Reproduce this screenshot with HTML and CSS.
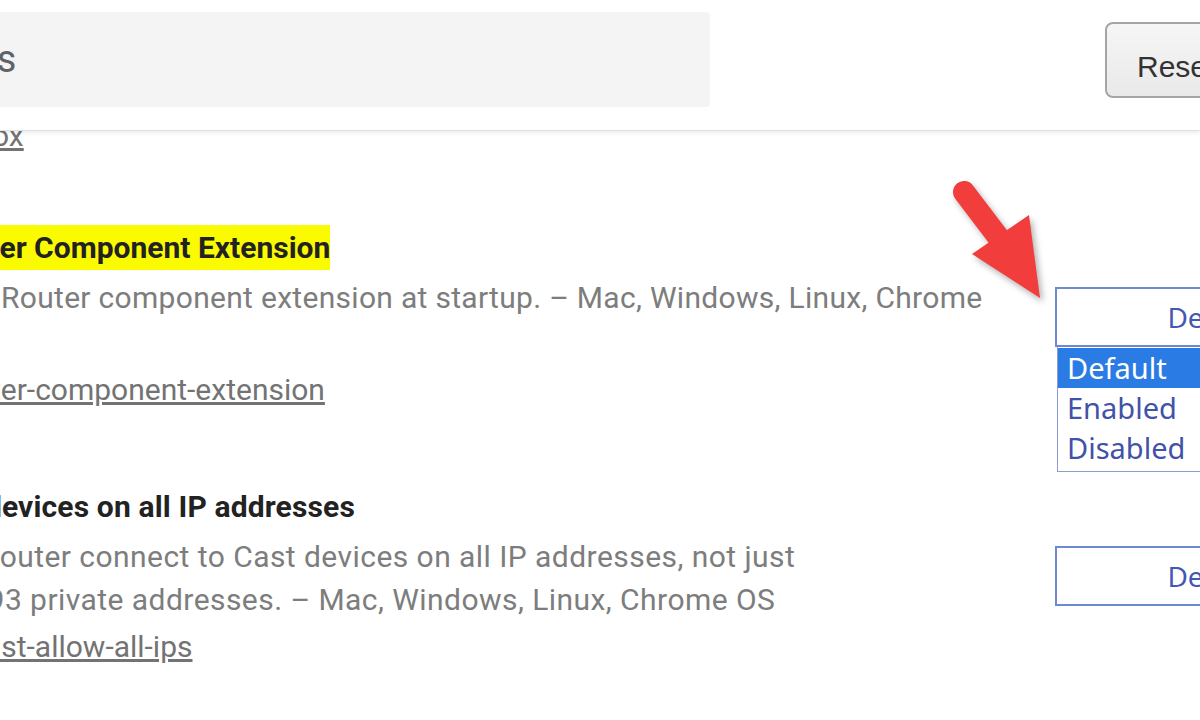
FILE: index.html
```html
<!DOCTYPE html>
<html lang="en">
<head>
  <meta charset="UTF-8">
  <title>Experiments</title>
  <link rel="stylesheet" href="styles.css">
</head>
<body>
  <header class="toolbar">
    <div class="search">Search flags</div>
    <button class="reset-btn">Reset all to default</button>
  </header>

  <main class="flags">
    <div class="flag flag-prev">
      <div class="flag-info">
        <div class="flag-ref"><a class="flag-link" href="#">#renderer-sandbox</a></div>
      </div>
    </div>

    <div class="flag">
      <div class="flag-info">
        <div class="flag-name"><mark>Load Media Router Component Extension</mark></div>
        <p class="flag-desc">Loads the Media Router component extension at startup. – Mac, Windows, Linux, Chrome OS</p>
        <div class="flag-ref"><a class="flag-link" href="#">#load-media-router-component-extension</a></div>
      </div>
      <div class="flag-control">
        <div class="select">Default</div>
        <!-- open dropdown -->
        <ul class="select-menu">
          <li class="selected">Default</li>
          <li>Enabled</li>
          <li>Disabled</li>
        </ul>
      </div>
    </div>

    <div class="flag flag-wide">
      <div class="flag-info">
        <div class="flag-name">Connect to Cast devices on all IP addresses</div>
        <p class="flag-desc">Have the Media Router connect to Cast devices on all IP addresses, not just RFC1918/RFC4193 private addresses. – Mac, Windows, Linux, Chrome OS</p>
        <div class="flag-ref"><a class="flag-link" href="#">#media-router-cast-allow-all-ips</a></div>
      </div>
      <div class="flag-control">
        <div class="select">Default</div>
      </div>
    </div>
  </main>

  <!-- annotation arrow -->
  <svg class="arrow" width="120" height="140" viewBox="0 0 120 140">
    <line x1="24" y1="22" x2="62" y2="72" stroke="#f23d3d" stroke-width="22" stroke-linecap="round"/>
    <polygon points="32,84 89,45 100,128" fill="#f23d3d"/>
  </svg>
</body>
</html>
```

FILE: styles.css
```css
/* Base */
body {
  font-family: Roboto, "Noto Sans", sans-serif;
  background: #fff;
  margin: 0;
  width: 1200px;
  height: 720px;
  overflow: hidden;
  position: relative;
}

/* Top bar */
.toolbar {
  display: flex;
  align-items: flex-start;
  height: 130px;
  background: #fff;
  border-bottom: 1px solid #e2e2e2;
  box-shadow: 0 2px 4px rgba(0,0,0,0.08);
  position: relative;
  z-index: 1;
}
.search {
  flex: none;
  box-sizing: border-box;
  width: 950px;
  height: 95px;
  margin: 12px 0 0 -240px;
  padding-left: 47px;
  background: #f4f4f4;
  border-radius: 4px;
  font-size: 38px;
  line-height: 95px;
  color: #5f6368;
  white-space: nowrap;
}
.reset-btn {
  flex: none;
  margin: 22px 0 0 395px;
  padding: 28px 30px 14px;
  font-family: "Liberation Sans", Arial, sans-serif;
  font-size: 30px;
  line-height: 30px;
  color: #333;
  background: linear-gradient(#f6f6f6, #e9e9e9);
  border: 2px solid #a5a5a5;
  border-radius: 8px;
  white-space: nowrap;
}

/* Flag list */
.flags {
  margin: -21px 0 0 -228px;
}
.flag {
  display: flex;
  margin-bottom: 72px;
}
.flag-prev {
  margin-bottom: 67px;
}
.flag-info {
  flex: none;
  width: 1233px;
  font-size: 30px;
}
.flag-name {
  font-weight: bold;
  color: #222;
  line-height: 45px;
  margin-bottom: 6px;
  white-space: nowrap;
}
.flag-name mark {
  background: #fbfb00;
  color: #222;
  padding: 5px 0;
}
.flag-desc {
  margin: 0 0 0 -5px;
  color: #7d7d7d;
  line-height: 44px;
  letter-spacing: 0.3px;
}
.flag-wide .flag-name {
  margin-left: -12px;
  letter-spacing: 0.15px;
}
.flag-wide .flag-desc {
  margin-left: -13px;
  letter-spacing: 0.45px;
  line-height: 43px;
}
.flag-ref {
  margin-top: 3px;
  line-height: 45px;
  white-space: nowrap;
}
.flag-link {
  color: #737373;
  text-decoration: underline;
}

/* Select control */
.flag-control {
  flex: none;
  position: relative;
  margin: 62px 0 0 50px;
  width: 321px;
}
.select {
  box-sizing: border-box;
  height: 60px;
  border: 2px solid #6d89d4;
  background: #fff;
  text-align: center;
  font-family: "Noto Sans", "Open Sans", sans-serif;
  font-size: 28px;
  line-height: 56px;
  color: #4358b3;
}
.select-menu {
  position: absolute;
  top: 60px;
  left: 2px;
  width: 319px;
  margin: 0;
  padding: 1px 0 3px;
  list-style: none;
  background: #fff;
  border: 1px solid #8d9bcf;
  border-top: none;
  font-family: "Noto Sans", "Open Sans", sans-serif;
  font-size: 29px;
}
.select-menu li {
  height: 40px;
  line-height: 40px;
  padding-left: 9px;
  color: #4152a8;
}
.select-menu li.selected {
  background: #2b7be4;
  color: #fff;
}

/* Arrow annotation */
.arrow {
  position: absolute;
  left: 940px;
  top: 170px;
  filter: drop-shadow(3px 4px 3px rgba(0,0,0,0.3));
}
```
